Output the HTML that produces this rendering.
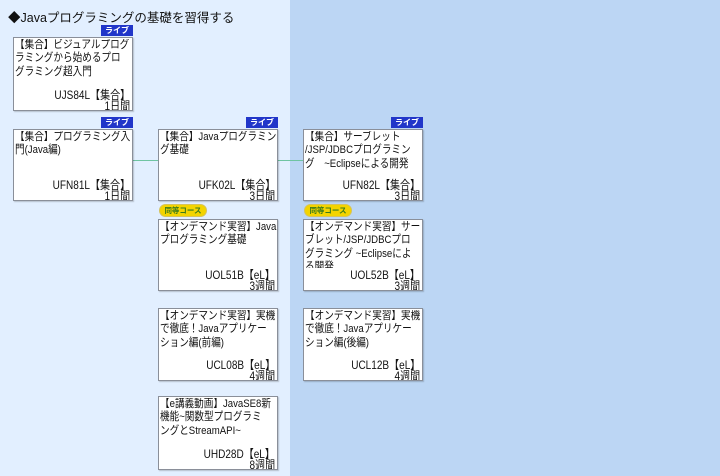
<!DOCTYPE html>
<html><head><meta charset="utf-8"><style>
*{margin:0;padding:0;box-sizing:border-box}
body{width:720px;height:476px;overflow:hidden;position:relative;font-family:"Liberation Sans","Noto Sans CJK JP",sans-serif;background:#bcd6f4}
.left{position:absolute;left:0;top:0;width:290px;height:476px;background:#e2efff}
.title{position:absolute;left:8px;top:7px;font-size:12.5px;color:#111;white-space:nowrap}
.box{position:absolute;width:120px;background:#fff;border:1px solid #8a8f99;box-shadow:1px 1px 1px rgba(0,0,0,.2);font-size:11.3px;line-height:13.3px;color:#111;overflow:hidden}
.box .t{position:absolute;left:1px;top:1px;height:46px;overflow:hidden;white-space:nowrap;transform:scaleX(0.85);transform-origin:left top;width:150px}
.box .c{position:absolute;right:2px;bottom:9px;line-height:12px;white-space:nowrap;font-size:11.8px;transform:scaleX(0.85);transform-origin:right}
.box .d{position:absolute;right:2px;bottom:-2px;line-height:12px;font-size:11.8px;transform:scaleX(0.85);transform-origin:right}
.live{position:absolute;width:32px;height:11px;background:#2136c9;color:#fff;font-size:8px;line-height:11px;text-align:center;font-weight:bold}
.eq{position:absolute;width:48px;height:13px;background:#f3d400;border:1px solid #d6c35a;border-radius:7px;color:#3a7a1a;font-size:7.5px;line-height:11px;text-align:center;font-weight:bold}
.ln{position:absolute;height:1px;background:#6fc4a2;top:160px}
</style></head><body>
<div class="left"></div>
<div class="title">◆Javaプログラミングの基礎を習得する</div>

<div class="ln" style="left:133px;width:25px"></div>
<div class="ln" style="left:278px;width:25px"></div>

<div class="live" style="left:101px;top:25px">ライブ</div>
<div class="box" style="left:13px;top:37px;height:74px"><div class="t">【集合】ビジュアルプログ<br>ラミングから始めるプロ<br>グラミング超入門</div><div class="c">UJS84L【集合】</div><div class="d">1日間</div></div>

<div class="live" style="left:101px;top:117px">ライブ</div>
<div class="box" style="left:13px;top:129px;height:72px"><div class="t">【集合】プログラミング入<br>門(Java編)</div><div class="c">UFN81L【集合】</div><div class="d">1日間</div></div>

<div class="live" style="left:246px;top:117px">ライブ</div>
<div class="box" style="left:158px;top:129px;height:72px"><div class="t">【集合】Javaプログラミン<br>グ基礎</div><div class="c">UFK02L【集合】</div><div class="d">3日間</div></div>

<div class="live" style="left:391px;top:117px">ライブ</div>
<div class="box" style="left:303px;top:129px;height:72px"><div class="t">【集合】サーブレット<br>/JSP/JDBCプログラミン<br>グ　~Eclipseによる開発</div><div class="c">UFN82L【集合】</div><div class="d">3日間</div></div>

<div class="eq" style="left:159px;top:204px">同等コース</div>
<div class="eq" style="left:304px;top:204px">同等コース</div>

<div class="box" style="left:158px;top:219px;height:72px"><div class="t">【オンデマンド実習】Java<br>プログラミング基礎</div><div class="c">UOL51B【eL】</div><div class="d">3週間</div></div>
<div class="box" style="left:303px;top:219px;height:72px"><div class="t" style="height:47px">【オンデマンド実習】サー<br>ブレット/JSP/JDBCプロ<br>グラミング ~Eclipseによ<br>る開発</div><div class="c">UOL52B【eL】</div><div class="d">3週間</div></div>

<div class="box" style="left:158px;top:308px;height:73px"><div class="t">【オンデマンド実習】実機<br>で徹底！Javaアプリケー<br>ション編(前編)</div><div class="c">UCL08B【eL】</div><div class="d">4週間</div></div>
<div class="box" style="left:303px;top:308px;height:73px"><div class="t">【オンデマンド実習】実機<br>で徹底！Javaアプリケー<br>ション編(後編)</div><div class="c">UCL12B【eL】</div><div class="d">4週間</div></div>

<div class="box" style="left:158px;top:396px;height:74px"><div class="t">【e講義動画】JavaSE8新<br>機能~関数型プログラミ<br>ングとStreamAPI~</div><div class="c">UHD28D【eL】</div><div class="d">8週間</div></div>
</body></html>
